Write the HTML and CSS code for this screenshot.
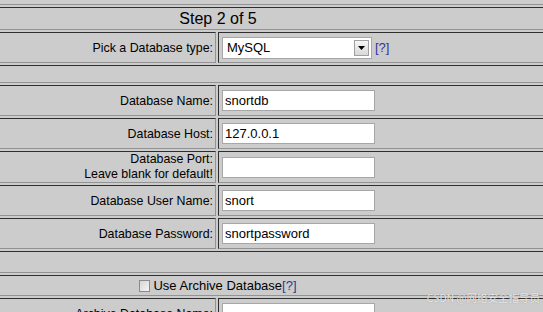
FILE: index.html
```html
<!DOCTYPE html>
<html lang="en">
<head>
    <meta charset="UTF-8">
    <title>BASE Setup - Step 2 of 5</title>
    <link rel="stylesheet" href="styles.css">
</head>
<body>
    <div class="page">
        <form class="setup">
            <div class="cell full row-top"></div>

            <div class="cell full row-title">Step 2 of 5</div>

            <div class="cell label row-pick">Pick a Database type:</div>
            <div class="cell value row-pick">
                <div class="select">
                    <span class="select-value">MySQL</span>
                    <span class="select-btn">
                        <svg width="7" height="4" viewBox="0 0 7 4"><path d="M0 0h7L3.5 4z" fill="#000"/></svg>
                    </span>
                </div>
                <a class="help" href="#">[?]</a>
            </div>

            <div class="cell full row-empty"></div>

            <div class="cell label">Database Name:</div>
            <div class="cell value"><input class="field" type="text" value="snortdb"></div>

            <div class="cell label">Database Host:</div>
            <div class="cell value"><input class="field" type="text" value="127.0.0.1"></div>

            <div class="cell label row-port">Database Port:<br>Leave blank for default!</div>
            <div class="cell value row-port"><input class="field" type="text" value=""></div>

            <div class="cell label">Database User Name:</div>
            <div class="cell value"><input class="field" type="text" value="snort"></div>

            <div class="cell label">Database Password:</div>
            <div class="cell value"><input class="field" type="text" value="snortpassword"></div>

            <div class="cell full row-empty2"></div>

            <div class="cell full row-check">
                <span class="checkbox"></span>
                <span class="check-text">Use Archive Database</span><a class="help" href="#">[?]</a>
            </div>

            <div class="cell label">Archive Database Name:</div>
            <div class="cell value"><input class="field" type="text" value=""></div>
        </form>
        <div class="watermark">CSDN @网络安全指导员</div>
    </div>
</body>
</html>
```

FILE: styles.css
```css
html, body {
    margin: 0;
    padding: 0;
    background-color: #cccccc;
    overflow: hidden;
}

body {
    font-family: "Liberation Sans", Arial, sans-serif;
    color: #000000;
}

.page {
    position: relative;
    width: 543px;
    height: 312px;
    overflow: hidden;
}

.setup {
    display: grid;
    grid-template-columns: 414px 1fr;
    gap: 2px;
    padding: 2px;
    width: 836px;
    margin: -20px 0 0 -200px;
    box-sizing: border-box;
    background-color: #cccccc;
}

.cell {
    box-sizing: border-box;
    height: 31px;
    border: 1px solid;
    border-color: #2e2e2e #939393 #939393 #2e2e2e;
    background-color: #cccccc;
    display: flex;
    align-items: center;
}

.full {
    grid-column: 1 / 3;
    justify-content: center;
}

.row-top { height: 23px; }
.row-title { height: 23px; font-size: 16px; }
.row-pick { height: 31px; }
.row-empty { height: 18px; }
.row-port { height: 32px; line-height: 15px; }
.row-empty2 { height: 22px; }
.row-check { height: 21px; font-size: 13px; }

.label {
    justify-content: flex-end;
    text-align: right;
    padding-right: 2px;
    font-size: 12.4px;
}

.value {
    padding-left: 3px;
    gap: 3px;
}

.field {
    box-sizing: border-box;
    width: 153px;
    height: 21px;
    margin: 0;
    padding: 0 2px;
    border: 1px solid #a7a7a7;
    background-color: #ffffff;
    font-family: "Liberation Sans", Arial, sans-serif;
    font-size: 13px;
    color: #000000;
}

.select {
    box-sizing: border-box;
    width: 150px;
    height: 22px;
    border: 1px solid #a7a7a7;
    background-color: #ffffff;
    display: flex;
    align-items: center;
    font-size: 13px;
}

.select-value {
    flex: 1;
    padding-left: 4px;
}

.select-btn {
    box-sizing: border-box;
    width: 15px;
    height: 16px;
    margin-right: 2px;
    border: 1px solid #a0a0a0;
    background: linear-gradient(#f6f6f6, #d9d9d9);
    display: flex;
    align-items: center;
    justify-content: center;
}

.help {
    color: #333399;
    text-decoration: none;
    font-size: 13px;
}

.checkbox {
    box-sizing: border-box;
    width: 11px;
    height: 12px;
    margin-right: 3px;
    border: 1px solid #8a8a8a;
    background: linear-gradient(135deg, #d6d6d6, #f4f4f4);
}

.watermark {
    position: absolute;
    right: 3px;
    bottom: 7px;
    font-family: "Noto Sans CJK SC", sans-serif;
    font-size: 10.5px;
    color: rgba(255, 255, 255, 0.8);
    text-shadow: 0 0 1px rgba(110, 110, 110, 0.7);
}
```
